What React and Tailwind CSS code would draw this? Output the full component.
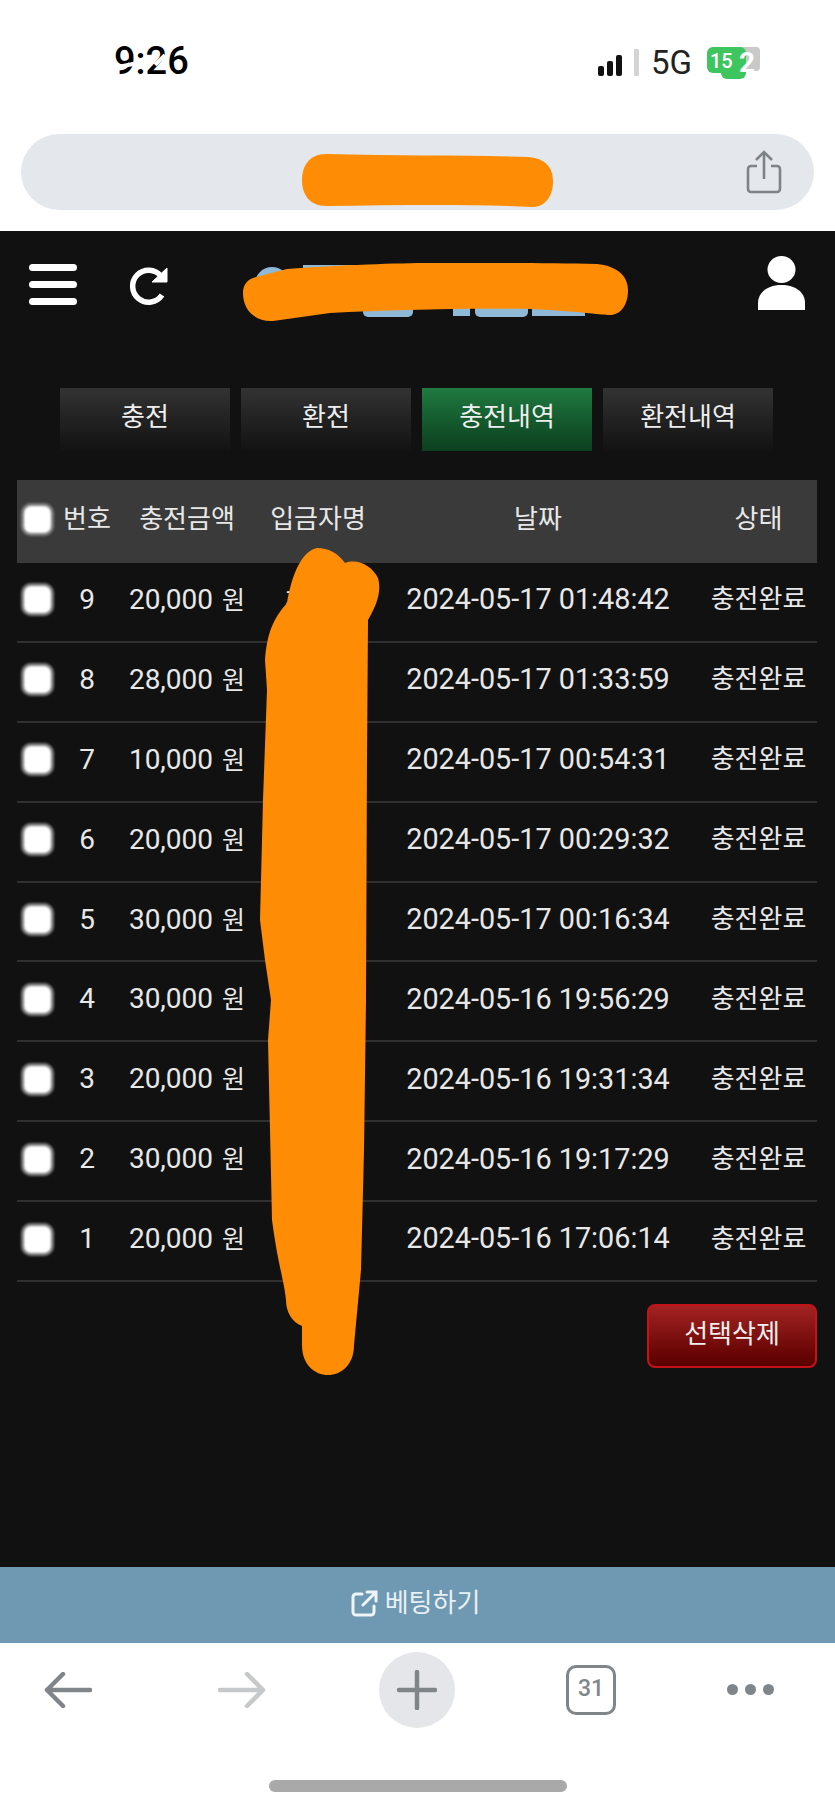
const rows = [
    ["9", "20,000", "2024-05-17 01:48:42", "ㅈ"],
    ["8", "28,000", "2024-05-17 01:33:59"],
    ["7", "10,000", "2024-05-17 00:54:31"],
    ["6", "20,000", "2024-05-17 00:29:32"],
    ["5", "30,000", "2024-05-17 00:16:34"],
    ["4", "30,000", "2024-05-16 19:56:29"],
    ["3", "20,000", "2024-05-16 19:31:34"],
    ["2", "30,000", "2024-05-16 19:17:29"],
    ["1", "20,000", "2024-05-16 17:06:14"],
];

const gridCols = "grid grid-cols-[43px_54px_146px_116px_324px_117px] items-center";

function Checkbox() {
    return (
        <div className="ml-[4px] h-[33px] w-[33px] rounded-[10px] border-[3px] border-[#7d7d7d] bg-white blur-[0.8px]" />
    );
}

function Tab({ label, active }) {
    return (
        <div
            className={`flex h-[63px] w-[170px] items-center justify-center pb-1 text-[26px] text-[#eee] ${
                active
                    ? "bg-gradient-to-b from-[#1f7a40] to-[#0c3f1e]"
                    : "bg-gradient-to-b from-[#333] to-[#121212]"
            }`}
        >
            {label}
        </div>
    );
}

function StatusBar() {
    return (
        <div className="flex h-[134px] items-start justify-between pt-[40px] pr-[75px] pl-[114px]">
            <div className="relative">
                <span className="font-['Roboto',sans-serif] text-[38px] leading-[42px] font-medium text-black">
                    9:26
                </span>
                {/* ghosted double exposure on the clock */}
                <div className="absolute top-[23px] left-[4px] h-[4px] w-[20px] -rotate-12 bg-white" />
                <div className="absolute top-[18px] left-[39px] h-[4px] w-[14px] -rotate-45 bg-white" />
            </div>
            <div className="mt-[7px] flex items-center">
                <svg width="42" height="28" viewBox="0 0 42 28">
                    <rect x="0" y="17" width="6" height="10" rx="2" fill="#111" />
                    <rect x="9" y="12" width="6" height="15" rx="2" fill="#111" />
                    <rect x="18" y="6" width="6" height="21" rx="2" fill="#111" />
                    <rect x="36" y="0" width="5" height="27" rx="1" fill="#d4d4d4" />
                </svg>
                <span className="ml-[11px] font-['Roboto',sans-serif] text-[33px] leading-[30px] text-[#222]">
                    5G
                </span>
                <div className="relative ml-[15px] h-[32px] w-[53px]">
                    <div className="absolute top-0 right-0 h-[24px] w-[30px] rounded bg-[#c9c9c9]" />
                    <div className="absolute top-0 left-0 h-[26px] w-[39px] rounded-md bg-[#3ec55e]" />
                    <div className="absolute top-[20px] left-[14px] h-[12px] w-[25px] rounded-b-md bg-[#3ec55e]" />
                    <span className="absolute top-[2px] left-[3px] font-['Roboto',sans-serif] text-[20px] leading-[24px] font-medium text-white">
                        15
                    </span>
                    <span className="absolute top-0 left-[32px] font-['Roboto',sans-serif] text-[28px] leading-[32px] font-bold text-white">
                        2
                    </span>
                </div>
            </div>
        </div>
    );
}

function AddressBar() {
    return (
        <div className="h-[97px] px-[21px]">
            <div className="flex h-[76px] items-center justify-end rounded-[38px] bg-[#e4e7eb] pr-[32px]">
                <svg width="36" height="44" viewBox="0 0 36 44" fill="none" stroke="#7d8489" strokeWidth="2.6">
                    <path d="M11 16H5a3 3 0 0 0-3 3v20a3 3 0 0 0 3 3h26a3 3 0 0 0 3-3V19a3 3 0 0 0-3-3h-6" />
                    <path d="M18 29V3M10 10l8-8 8 8" />
                </svg>
            </div>
        </div>
    );
}

function Header() {
    return (
        <div className="flex h-[157px] items-start justify-between pt-[25px] pr-[30px] pl-[29px]">
            <div className="flex items-start">
                <div className="mt-2 flex w-[48px] flex-col gap-[10px]">
                    <div className="h-[7px] rounded-full bg-white" />
                    <div className="h-[7px] rounded-full bg-white" />
                    <div className="h-[7px] rounded-full bg-white" />
                </div>
                <svg className="mt-[10px] ml-[52px]" width="42" height="40" viewBox="0 0 42 40" fill="none" stroke="#fff" strokeWidth="5.5">
                    <path d="M33 29a16 16 0 1 1-1-19" />
                    <path d="M38 2v14H23z" fill="#fff" strokeWidth="1" />
                </svg>
            </div>
            <svg width="47" height="54" viewBox="0 0 47 54" fill="#fff">
                <ellipse cx="23.5" cy="13.5" rx="14" ry="13.5" />
                <path d="M0 54v-7c0-11 10-18 23.5-18S47 36 47 47v7z" />
            </svg>
        </div>
    );
}

function HistoryTable() {
    return (
        <div className="ml-[17px] w-[800px]">
            <div className={`${gridCols} h-[83px] bg-[#3a3a3a] pb-1 text-center text-[#e8e8e8]`}>
                <Checkbox />
                <span>번호</span>
                <span>충전금액</span>
                <span>입금자명</span>
                <span>날짜</span>
                <span>상태</span>
            </div>
            {rows.map(([no, amount, date, name]) => (
                <div
                    key={no}
                    className={`${gridCols} h-[79.9px] border-b-2 border-[#303030] pb-1 text-center text-[#e8e8e8]`}
                >
                    <Checkbox />
                    <span className="font-['Roboto',sans-serif] text-[28px]">{no}</span>
                    <span className="whitespace-nowrap">
                        <span className="font-['Roboto',sans-serif] text-[28px]">{amount}</span>
                        <span className="ml-[9px] text-[25px]">원</span>
                    </span>
                    <span className="pl-[22px] text-left">{name}</span>
                    <span className="font-['Roboto',sans-serif] text-[28.8px] whitespace-nowrap">{date}</span>
                    <span>충전완료</span>
                </div>
            ))}
            <div className="mt-[22px] flex justify-end">
                <div className="flex h-[64px] w-[170px] items-center justify-center rounded-lg border-2 border-[#c4121a] bg-gradient-to-b from-[#a32222] to-[#5a0000] pb-1 text-[#eee]">
                    선택삭제
                </div>
            </div>
        </div>
    );
}

function BrowserToolbar() {
    return (
        <div className="flex h-[93px] items-center pl-[44px]">
            <svg width="48" height="36" viewBox="0 0 48 36" fill="none" stroke="#7f8589" strokeWidth="4.5" strokeLinecap="round" strokeLinejoin="round">
                <path d="M46 18H3M19 2 3 18l16 16" />
            </svg>
            <svg className="ml-[126px]" width="48" height="36" viewBox="0 0 48 36" fill="none" stroke="#c6c8ca" strokeWidth="4.5" strokeLinecap="round" strokeLinejoin="round">
                <path d="M2 18h43M29 2l16 16-16 16" />
            </svg>
            <div className="ml-[113px] flex h-[76px] w-[76px] items-center justify-center rounded-full bg-[#e4e6ea]">
                <svg width="40" height="40" viewBox="0 0 40 40" stroke="#7f8589" strokeWidth="4.5" strokeLinecap="round">
                    <path d="M20 2v36M2 20h36" />
                </svg>
            </div>
            <div className="ml-[111px] flex h-[50px] w-[50px] items-center justify-center rounded-[10px] border-[3.5px] border-[#7f8589] font-['Roboto',sans-serif] text-[23px] font-medium text-[#7f8589]">
                31
            </div>
            <div className="ml-[111px] flex gap-[7px]">
                <div className="h-[11px] w-[11px] rounded-full bg-[#7f8589]" />
                <div className="h-[11px] w-[11px] rounded-full bg-[#7f8589]" />
                <div className="h-[11px] w-[11px] rounded-full bg-[#7f8589]" />
            </div>
        </div>
    );
}

// orange marker strokes hiding the site name and the depositor column,
// with the bits of the logo that still peek out around the stroke
function Scribbles() {
    return (
        <svg className="pointer-events-none absolute top-0 left-0" width="835" height="1809" viewBox="0 0 835 1809">
            <g fill="#8fb9d6">
                <circle cx="272" cy="284" r="17" />
                <rect x="303" y="265" width="54" height="20" />
                <rect x="363" y="296" width="50" height="21" rx="5" />
                <rect x="453" y="296" width="17" height="20" />
                <rect x="475" y="296" width="53" height="21" rx="5" />
                <rect x="532" y="296" width="53" height="20" />
            </g>
            <path
                d="M326 154 C400 156 470 155 527 157 C546 158 553 168 553 181 C553 197 545 207 532 207 C470 204 400 205 326 206 C310 206 302 195 302 180 C302 165 310 154 326 154 Z"
                fill="#ff8c04"
            />
            <path
                d="M243 293 C243 284 248 279 256 277 L287 269 C340 265 400 263 430 263 C490 263 550 263 597 264 C616 266 628 275 628 290 C628 306 620 315 610 315 C600 315 590 312 530 309 C460 308 390 310 330 313 L273 321 C255 322 243 310 243 293 Z"
                fill="#ff8c04"
            />
            <path
                d="M317 548 C328 548 338 553 345 563 C358 558 372 566 378 578 C382 592 376 606 368 620 L367 760 L366 1000 L364 1150 L361 1270 L354 1345 C354 1385 302 1385 302 1345 L302 1326 C292 1322 286 1312 286 1300 C284 1280 278 1265 272 1220 L270 1130 L268 1040 L271 1000 L265 960 L260 920 L263 800 L267 690 L265 660 C267 635 272 620 287 603 C290 585 298 552 317 548 Z"
                fill="#ff8c04"
            />
        </svg>
    );
}

export default function App() {
    return (
        <div className="relative flex h-[1809px] w-[835px] flex-col overflow-hidden bg-white font-['Roboto','Noto_Sans_CJK_KR',sans-serif] text-[26px]">
            <StatusBar />
            <AddressBar />
            <div className="flex h-[1336px] flex-col bg-[#111]">
                <Header />
                <div className="flex gap-[11px] pl-[60px]">
                    <Tab label="충전" />
                    <Tab label="환전" />
                    <Tab label="충전내역" active />
                    <Tab label="환전내역" />
                </div>
                <div className="h-[29px]" />
                <HistoryTable />
            </div>
            <div className="flex h-[76px] items-center justify-center gap-[7px] bg-[#6f98b2] pr-[4px] pb-1 text-[#e8f0f4]">
                <svg width="27" height="27" viewBox="0 0 27 27" fill="none" stroke="#eef4f7" strokeWidth="3" strokeLinecap="round">
                    <path d="M11 4H5a3 3 0 0 0-3 3v15a3 3 0 0 0 3 3h15a3 3 0 0 0 3-3v-6" />
                    <path d="M12 15 25 2M16 2h9v9" />
                </svg>
                베팅하기
            </div>
            <BrowserToolbar />
            <div className="flex flex-1 justify-center pt-[44px]">
                <div className="h-[12px] w-[298px] rounded-md bg-[#a9a9a9]" />
            </div>
            <Scribbles />
        </div>
    );
}
